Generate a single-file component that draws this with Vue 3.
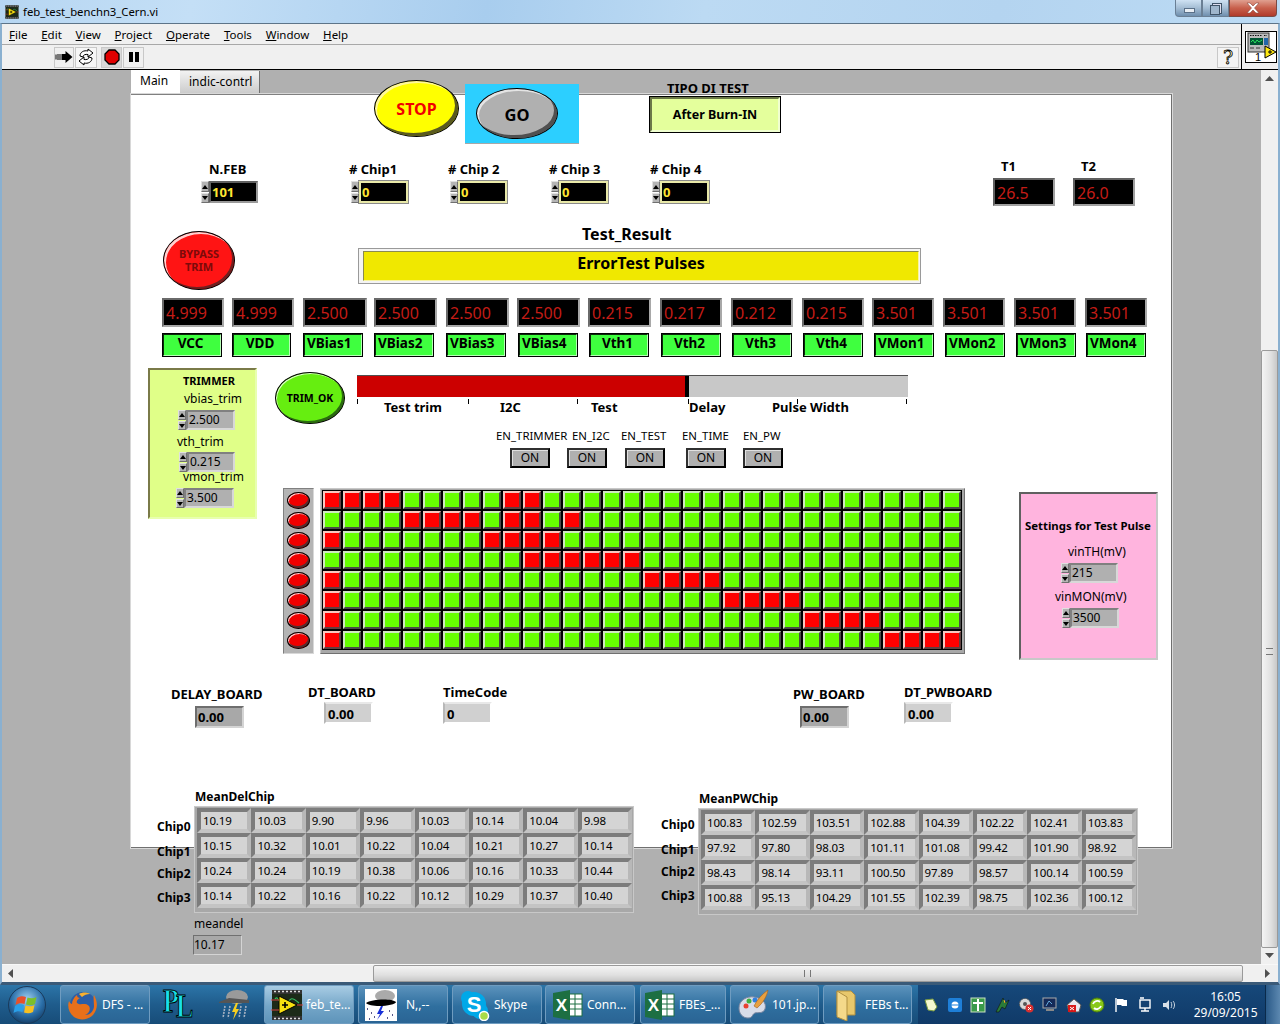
<template>
  <div class="screen">
    <svg class="defs" width="0" height="0">
      <symbol id="lv" viewBox="0 0 32 32">
        <rect x="1" y="1" width="30" height="30" fill="#1c2a18" />
        <rect x="1" y="1" width="30" height="4" fill="#333" />
        <rect x="1" y="27" width="30" height="4" fill="#333" />
        <path d="M3 2.500h26M3 29.500h26" stroke="#ddd" stroke-width="1.400" stroke-dasharray="2 2" />
        <path d="M4 10c4-6 6 14 11 6s6-8 13-2" fill="none" stroke="#35c060" stroke-width="1.200" />
        <path d="M8 7l18 9-18 9z" fill="#f8e010" stroke="#000" />
        <path d="M11 16h6M14 13v6" stroke="#000" stroke-width="1.600" />
        <path d="M0 11h8M0 21h8" stroke="#d04040" />
        <path d="M26 16h6" stroke="#d04040" />
      </symbol>
    </svg>

    <div class="titlebar">
      <svg class="title-icon"><use href="#lv" /></svg>
      <span class="title-text">feb_test_benchn3_Cern.vi</span>
      <div class="winbtns">
        <div class="winbtn min"><i></i></div>
        <div class="winbtn max"><i></i><b></b></div>
        <div class="winbtn close">
          <svg width="16" height="12" viewBox="0 0 16 12">
            <path d="M2 1h3l3 3 3-3h3l-4.500 5 4.500 5h-3l-3-3-3 3h-3l4.500-5z" fill="#fff" stroke="#8a4a40" stroke-width=".6" />
          </svg>
        </div>
      </div>
    </div>

    <div class="window">
      <div class="head">
        <div class="bars">
          <div class="menubar">
            <span v-for="m in menus" :key="m" class="menu-item"><u>{{ m[0] }}</u>{{ m.slice(1) }}</span>
          </div>
          <div class="toolbar">
            <div class="tool">
              <svg width="18" height="14" viewBox="0 0 18 14">
                <path d="M1 4.500v5M3 4v6M5 4v6" stroke="#000" />
                <path d="M6.500 4h4V1l7 6-7 6v-3h-4z" fill="#000" />
              </svg>
            </div>
            <div class="tool wide">
              <svg width="18" height="18" viewBox="0 0 18 18">
                <path d="M3 8c0-4 4-6 8-5V1l5 4-5 4V6.500c-2.500-.5-5 .3-5 2.500z" fill="#fff" stroke="#000" />
                <path d="M15 10c0 4-4 6-8 5v2l-5-4 5-4v2.500c2.500.5 5-.3 5-2.500z" fill="#fff" stroke="#000" />
              </svg>
            </div>
            <div class="tool abort">
              <svg width="16" height="16" viewBox="0 0 16 16">
                <path d="M5 1h6l4 4v6l-4 4H5l-4-4V5z" fill="#e00000" stroke="#000" stroke-width="1.300" />
              </svg>
            </div>
            <div class="tool">
              <svg width="12" height="12" viewBox="0 0 12 12"><path d="M1 1h4v10H1zM7 1h4v10H7z" /></svg>
            </div>
            <div class="tool help"><span class="help-q">?</span></div>
          </div>
        </div>
        <div class="vi-cell">
          <div class="vi-icon">
            <svg width="30" height="30" viewBox="0 0 30 30">
              <rect x="2" y="1" width="21" height="19" fill="#bbb" stroke="#333" />
              <path d="M4 3.500h12M18 3.500h3" stroke="#111" stroke-dasharray="1.500 1" />
              <rect x="4" y="6" width="13" height="7" fill="#053" />
              <path d="M5 10l2-2 2 3 2-3 2 2 3-2" stroke="#3f6" fill="none" stroke-width=".8" />
              <rect x="18" y="6" width="4" height="7" fill="#26a" />
              <path d="M4 16h4M10 16h4" stroke="#333" />
              <path d="M19 14l11 6-11 6z" fill="#ffe810" stroke="#000" />
              <path d="M22 20h4M24 18v4" stroke="#000" />
              <text x="9" y="29" class="vi-num">1</text>
            </svg>
          </div>
        </div>
      </div>

      <div class="middle">
        <div class="canvas">
          <div class="tab-strip">
            <div class="tab active">Main</div>
            <div class="tab">indic-contrl</div>
          </div>
          <div class="panel"></div>

          <div class="oval stop">STOP</div>
          <div class="go-back"><div class="oval go">GO</div></div>
          <div class="test-type">After Burn-IN</div>

          <div class="result-bar"><div class="result-fill">ErrorTest Pulses</div></div>
          <div class="oval bypass">BYPASS<br />TRIM</div>
          <div class="oval trim-ok">TRIM_OK</div>

          <div v-for="l in labels" :key="l.text + l.x" class="lbl" :class="l.cls" :style="at(l.x, l.y - 10)">{{ l.text }}</div>

          <div v-for="n in numerics" :key="n.key" class="numeric" :style="at(n.x, n.y)">
            <div class="spin"><span class="up"></span><span class="down"></span></div>
            <div class="num-box" :class="n.cls" :style="{ width: n.w + 'px', height: n.h + 'px' }">{{ n.value }}</div>
          </div>

          <div v-for="(v, i) in readings" :key="'r' + i" class="reading" :style="{ ...at(v.x, 298), width: v.w + 'px' }">{{ v.value }}</div>
          <div class="reading temp" :style="at(993, 178)">26.5</div>
          <div class="reading temp" :style="at(1073, 178)">26.0</div>
          <div v-for="b in greens" :key="b.text" class="green-btn" :class="b.cls" :style="{ ...at(b.x, 333), width: b.w + 'px' }">{{ b.text }}</div>

          <div class="trimmer"></div>
          <div class="pink"></div>
          <!-- these sit over the two coloured boxes so they come later in the list -->
          <div v-for="l in panelLabels" :key="l.text" class="lbl" :class="l.cls" :style="at(l.x, l.y - 10)">{{ l.text }}</div>
          <div v-for="n in panelNumerics" :key="n.key" class="numeric" :style="at(n.x, n.y)">
            <div class="spin"><span class="up"></span><span class="down"></span></div>
            <div class="num-box grey" :style="{ width: n.w + 'px', height: n.h + 'px' }">{{ n.value }}</div>
          </div>

          <div class="slide">
            <div class="slide-fill"></div>
            <div class="slide-knob"></div>
          </div>
          <div v-for="t in ticks" :key="t" class="tick" :style="at(t, 399)"></div>

          <div v-for="b in onButtons" :key="b" class="on-btn" :style="at(b, 448)">ON</div>

          <div class="led-col">
            <div v-for="i in 8" :key="i" class="led"></div>
          </div>

          <div class="matrix">
            <div class="matrix-inner">
              <template v-for="(row, r) in matrix" :key="r">
                <div v-for="(on, c) in row" :key="c" class="cell" :class="on ? 'red' : 'green'"></div>
              </template>
            </div>
          </div>

          <div v-for="b in boards" :key="b.x" class="board" :class="b.cls" :style="at(b.x, b.y)">{{ b.value }}</div>

          <div v-for="t in tables" :key="t.x" class="table" :style="at(t.x, t.y)">
            <template v-for="(row, r) in t.rows" :key="r">
              <div v-for="(v, c) in row" :key="c" class="tcell">{{ v }}</div>
            </template>
          </div>
          <div class="meandel">10.17</div>
        </div>

        <div class="vscroll">
          <svg class="arrow" width="9" height="6" viewBox="0 0 9 6"><path d="M4.500 0l4.500 5H0z" fill="#505050" /></svg>
          <div class="vtrack"><div class="vthumb"><i></i></div></div>
          <svg class="arrow" width="9" height="6" viewBox="0 0 9 6"><path d="M4.500 6L9 1H0z" fill="#505050" /></svg>
        </div>
      </div>

      <div class="hscroll">
        <svg width="6" height="9" viewBox="0 0 6 9"><path d="M0 4.500L5 0v9z" fill="#505050" /></svg>
        <div class="htrack"><div class="hthumb"><i></i></div></div>
        <svg width="6" height="9" viewBox="0 0 6 9"><path d="M6 4.500L1 0v9z" fill="#505050" /></svg>
      </div>
    </div>

    <div class="taskbar">
      <div class="orb-slot">
        <svg width="40" height="40" viewBox="0 0 40 40">
          <defs>
            <radialGradient id="orb" cx=".5" cy=".35" r=".7">
              <stop offset="0" stop-color="#9fd0f0" />
              <stop offset=".6" stop-color="#2a6ea8" />
              <stop offset="1" stop-color="#12365c" />
            </radialGradient>
          </defs>
          <circle cx="20" cy="20" r="18.500" fill="url(#orb)" stroke="#1a3a5a" />
          <path d="M10 13c3-2 6-2 9-1l-1.500 7c-3-1-6-1-9 1z" fill="#e8502a" />
          <path d="M20.500 12.500c3 1 6 1 9-.5l-1.500 7c-3 1.500-6 1.500-9 .5z" fill="#7cbf2a" />
          <path d="M8 21c3-2 6-2 9-1l-1.500 7c-3-1-6-1-9 1z" fill="#2a9fe8" />
          <path d="M18.500 20.500c3 1 6 1 9-.5L26 27c-3 1.500-6 1.500-9 .5z" fill="#f8c020" />
        </svg>
      </div>

      <div class="task-btn" style="width: 90px">
        <svg class="task-icon" viewBox="0 0 32 32">
          <circle cx="16" cy="16" r="13" fill="#2b5ea7" />
          <path d="M27 6c4 7 4 14-1 20-5 5-13 6-19 2C2 24 0 18 2 12c1 2 2 3 3 3 0-3 2-7 5-9 0 2 1 3 3 3-2 1-4 3-3 5 3 3 8-1 12 3 2 3 0 8-4 9 6 0 9-5 9-9 0-4-1-8 0-11z" fill="#e8701a" />
          <path d="M12 5c3-2 8-2 11 0-3 0-6 1-8 3z" fill="#f8b030" />
        </svg>
        <span>DFS - ...</span>
      </div>
      <div class="plain-slot pl-slot">
        <span class="pl-letter pl-p">P</span>
        <span class="pl-letter pl-l">L</span>
      </div>
      <div class="plain-slot storm-slot">
        <svg width="34" height="34" viewBox="0 0 34 34">
          <ellipse cx="20" cy="9" rx="11" ry="7" fill="#9a9a9a" />
          <path d="M2 14l10-4 20 2v3H2z" fill="#555" />
          <path d="M8 18l-2 12M13 18l-2 12M24 18l-2 12M29 18l-2 12" stroke="#a8b4c4" stroke-dasharray="2 1" stroke-width="1.600" />
          <path d="M19 15l-4 9h3l-2 8 6-11h-3l2-6z" fill="#f8d020" />
        </svg>
      </div>
      <div class="task-btn active" style="width: 90px">
        <svg class="task-icon"><use href="#lv" /></svg>
        <span>feb_te...</span>
      </div>
      <div class="task-btn" style="width: 90px">
        <svg class="task-icon noise" viewBox="0 0 32 32">
          <rect width="32" height="32" fill="#fff" />
          <ellipse cx="20" cy="7" rx="10" ry="6" fill="#aaa" />
          <path d="M1 14c5-4 26-5 30-1 0 4-26 6-30 1z" fill="#000" />
          <path d="M2 20h1M6 24h1M9 28h1M4 30h1M24 22h1M27 26h1M22 29h1" stroke="#226" stroke-width="1.500" />
          <path d="M16 17l-4 8h3l-3 6 7-9h-3l2-5z" fill="#1830d8" />
        </svg>
        <span class="mid-text">N,,--</span>
      </div>
      <div class="task-btn" style="width: 90px">
        <svg class="task-icon" viewBox="0 0 32 32">
          <circle cx="9" cy="9" r="7" fill="#00a8e8" />
          <circle cx="21" cy="22" r="8" fill="#00a8e8" />
          <circle cx="15" cy="15" r="12" fill="#00a8e8" />
          <text x="15" y="23" class="skype-s">S</text>
          <circle cx="25" cy="27" r="4.500" fill="#a8dc48" stroke="#fff" stroke-width="1.500" />
        </svg>
        <span>Skype</span>
      </div>
      <div class="task-btn" style="width: 90px; margin-left: -1px">
        <svg class="task-icon" viewBox="0 0 32 32">
          <rect x="16" y="5" width="14" height="22" fill="#fff" stroke="#1d6f42" />
          <path d="M16 10h14M16 15h14M16 20h14M23 5v22" stroke="#1d6f42" />
          <path d="M1 4l17-3v30l-17-3z" fill="#1d6f42" />
          <text x="9.500" y="22" class="excel-x">X</text>
        </svg>
        <span>Conn...</span>
      </div>
      <div class="task-btn shift" style="width: 86px; margin-left: 1px">
        <svg class="task-icon" viewBox="0 0 32 32">
          <rect x="16" y="5" width="14" height="22" fill="#fff" stroke="#1d6f42" />
          <path d="M16 10h14M16 15h14M16 20h14M23 5v22" stroke="#1d6f42" />
          <path d="M1 4l17-3v30l-17-3z" fill="#1d6f42" />
          <text x="9.500" y="22" class="excel-x">X</text>
        </svg>
        <span>FBEs_...</span>
      </div>
      <div class="task-btn" style="width: 89px">
        <svg class="task-icon" viewBox="0 0 32 32">
          <path d="M2 19c0-8 8-12 15-11 8 1 13 6 11 12-2 5-7 3-10 4s-2 5-7 5-9-4-9-10z" fill="#d8dce8" stroke="#7a86a0" />
          <circle cx="9" cy="17" r="2.500" fill="#e84030" />
          <circle cx="12" cy="12" r="2.500" fill="#40b040" />
          <circle cx="18" cy="11" r="2.500" fill="#3080e0" />
          <path d="M31 1c-1 6-5 13-11 18l-3-2c3-6 8-12 14-16z" fill="#e8a040" stroke="#a06020" stroke-width=".6" />
        </svg>
        <span>101.jp...</span>
      </div>
      <div class="task-btn folder" style="width: 89px">
        <svg class="task-icon" viewBox="0 0 32 32">
          <path d="M8 2h14l4 4v20H8z" fill="#e8c86c" stroke="#b09040" />
          <path d="M8 2l10 6v24L8 28z" fill="#f4d98a" stroke="#b09040" />
        </svg>
        <span class="far-text">FEBs t...</span>
      </div>

      <div class="tray">
        <svg class="tray-ico" viewBox="0 0 16 16"><path d="M2 3l8-1 4 8-3 4-6-1z" fill="#f4f8d0" stroke="#7a9a40" /></svg>
        <svg class="tray-ico" viewBox="0 0 16 16"><rect x="1" y="1" width="14" height="14" rx="2" fill="#1e7fd8" /><circle cx="8" cy="8" r="3.500" fill="#fff" /><path d="M4 8h8" stroke="#1e7fd8" /></svg>
        <svg class="tray-ico" viewBox="0 0 16 16"><rect x="1" y="1" width="14" height="14" fill="#3a9a4a" stroke="#c8e0c0" /><path d="M8 2v12M3 6h10" stroke="#fff" stroke-width="2" /></svg>
        <svg class="tray-ico" viewBox="0 0 16 16"><path d="M2 15L9 1l2 5 4-3-4 9-3-2-3 5z" fill="#2a7a3a" stroke="#111" stroke-width=".6" /><path d="M10 3l1 3" stroke="#f8c020" /></svg>
        <svg class="tray-ico" viewBox="0 0 16 16"><circle cx="7" cy="7" r="5.500" fill="#d8d8d8" stroke="#555" stroke-dasharray="2 1" /><circle cx="7" cy="7" r="2" fill="#555" /><circle cx="11.500" cy="11.500" r="4" fill="#d83030" /><path d="M10 10l3 3M13 10l-3 3" stroke="#fff" /></svg>
        <svg class="tray-ico" viewBox="0 0 16 16"><rect x="1" y="1" width="13" height="10" fill="#142a58" stroke="#aaa" /><path d="M4 9l3-5 3 3" stroke="#6ad" fill="none" /><rect x="4" y="12" width="8" height="2" fill="#888" /></svg>
        <svg class="tray-ico" viewBox="0 0 16 16"><path d="M1 8l7-6 7 6-2 7H3z" fill="#e8e8f0" stroke="#555" /><rect x="2" y="8" width="8" height="7" fill="#d81818" /><path d="M4 10l4 3M8 10l-4 3" stroke="#fff" /></svg>
        <svg class="tray-ico" viewBox="0 0 16 16"><circle cx="8" cy="8" r="7" fill="#88c818" stroke="#4a7a10" /><path d="M4 7c1-3 5-4 7-2M12 9c-1 3-5 4-7 2" stroke="#fff" stroke-width="1.800" fill="none" /></svg>
        <svg class="tray-ico" viewBox="0 0 16 16"><path d="M3 1v14" stroke="#fff" stroke-width="1.400" /><path d="M4 2h6l1 1h3v6H9L8 8H4z" fill="#fff" /></svg>
        <svg class="tray-ico" viewBox="0 0 16 16"><rect x="3" y="3" width="10" height="8" fill="none" stroke="#fff" stroke-width="1.400" /><path d="M8 11v3M4 14h8M3 1h4" stroke="#fff" stroke-width="1.400" /></svg>
        <svg class="tray-ico" viewBox="0 0 16 16"><path d="M2 6h3l3-3v10l-3-3H2z" fill="#d8e0e8" /><path d="M10 5c1 2 1 4 0 6M12 4c2 2 2 6 0 8" stroke="#c8d4e0" fill="none" /></svg>
        <div class="clock"><div>16:05</div><div>29/09/2015</div></div>
        <div class="show-desktop"></div>
      </div>
    </div>
  </div>
</template>

<script setup>
import { computed } from 'vue';

const menus = ['File', 'Edit', 'View', 'Project', 'Operate', 'Tools', 'Window', 'Help'];

// front panel objects are placed like on the LabVIEW panel, coordinates are screen pixels
function at(x, y) {
  return { left: (x - 2) + 'px', top: (y - 70) + 'px' };
}

const labels = [
  { text: 'TIPO DI TEST', x: 667, y: 88, cls: 'b13' },
  { text: 'N.FEB', x: 209, y: 169, cls: 'b13' },
  { text: '# Chip1', x: 349, y: 169, cls: 'b13' },
  { text: '# Chip 2', x: 448, y: 169, cls: 'b13' },
  { text: '# Chip 3', x: 549, y: 169, cls: 'b13' },
  { text: '# Chip 4', x: 650, y: 169, cls: 'b13' },
  { text: 'T1', x: 1001, y: 166, cls: 'b13' },
  { text: 'T2', x: 1081, y: 166, cls: 'b13' },
  { text: 'Test_Result', x: 582, y: 234, cls: 'b16' },
  { text: 'Test trim', x: 384, y: 407, cls: 'b13' },
  { text: 'I2C', x: 500, y: 407, cls: 'b13' },
  { text: 'Test', x: 591, y: 407, cls: 'b13' },
  { text: 'Delay', x: 689, y: 407, cls: 'b13' },
  { text: 'Pulse Width', x: 772, y: 407, cls: 'b13' },
  { text: 'EN_TRIMMER', x: 496, y: 436, cls: 'n11' },
  { text: 'EN_I2C', x: 572, y: 436, cls: 'n11' },
  { text: 'EN_TEST', x: 621, y: 436, cls: 'n11' },
  { text: 'EN_TIME', x: 682, y: 436, cls: 'n11' },
  { text: 'EN_PW', x: 743, y: 436, cls: 'n11' },
  { text: 'DELAY_BOARD', x: 171, y: 694, cls: 'b13' },
  { text: 'DT_BOARD', x: 308, y: 692, cls: 'b13' },
  { text: 'TimeCode', x: 443, y: 692, cls: 'b13' },
  { text: 'PW_BOARD', x: 793, y: 694, cls: 'b13' },
  { text: 'DT_PWBOARD', x: 904, y: 692, cls: 'b13' },
  { text: 'MeanDelChip', x: 195, y: 797, cls: 'b12' },
  { text: 'Chip0', x: 157, y: 827, cls: 'b12' },
  { text: 'Chip1', x: 157, y: 852, cls: 'b12' },
  { text: 'Chip2', x: 157, y: 874, cls: 'b12' },
  { text: 'Chip3', x: 157, y: 898, cls: 'b12' },
  { text: 'MeanPWChip', x: 699, y: 799, cls: 'b12' },
  { text: 'Chip0', x: 661, y: 825, cls: 'b12' },
  { text: 'Chip1', x: 661, y: 850, cls: 'b12' },
  { text: 'Chip2', x: 661, y: 872, cls: 'b12' },
  { text: 'Chip3', x: 661, y: 896, cls: 'b12' },
  { text: 'meandel', x: 194, y: 924, cls: 'n12' },
];

const panelLabels = [
  { text: 'TRIMMER', x: 183, y: 381, cls: 'b11' },
  { text: 'vbias_trim', x: 184, y: 399, cls: 'n12' },
  { text: 'vth_trim', x: 177, y: 442, cls: 'n12' },
  { text: 'vmon_trim', x: 183, y: 477, cls: 'n12' },
  { text: 'Settings for Test Pulse', x: 1025, y: 526, cls: 'b114' },
  { text: 'vinTH(mV)', x: 1068, y: 552, cls: 'n12' },
  { text: 'vinMON(mV)', x: 1055, y: 597, cls: 'n12' },
];

const numerics = [
  { key: 'feb', x: 201, y: 181, w: 49, h: 22, value: '101' },
  { key: 'c1', x: 351, y: 181, w: 49, h: 22, value: '0', cls: 'yellow' },
  { key: 'c2', x: 450, y: 181, w: 49, h: 22, value: '0', cls: 'yellow' },
  { key: 'c3', x: 551, y: 181, w: 49, h: 22, value: '0', cls: 'yellow' },
  { key: 'c4', x: 652, y: 181, w: 49, h: 22, value: '0', cls: 'yellow' },
];

const panelNumerics = [
  { key: 'vb', x: 178, y: 410, w: 49, h: 20, value: '2.500' },
  { key: 'vt', x: 179, y: 452, w: 48, h: 20, value: '0.215' },
  { key: 'vm', x: 176, y: 488, w: 50, h: 20, value: '3.500' },
  { key: 'th', x: 1061, y: 563, w: 49, h: 20, value: '215' },
  { key: 'mon', x: 1062, y: 608, w: 49, h: 20, value: '3500' },
];

const readings = [
  [162, 62, '4.999'], [232, 62, '4.999'], [303, 64, '2.500'], [374, 63, '2.500'], [446, 63, '2.500'], [517, 63, '2.500'],
  [588, 63, '0.215'], [660, 62, '0.217'], [731, 62, '0.212'], [802, 62, '0.215'],
  [872, 62, '3.501'], [943, 62, '3.501'], [1014, 62, '3.501'], [1085, 62, '3.501'],
].map(([x, w, value]) => ({ x, w, value }));

const greens = [
  { text: 'VCC', x: 162, w: 60, cls: 'center' }, { text: 'VDD', x: 232, w: 59, cls: 'center' },
  { text: 'VBias1', x: 303, w: 60 }, { text: 'VBias2', x: 374, w: 60 }, { text: 'VBias3', x: 446, w: 60 }, { text: 'VBias4', x: 518, w: 60 },
  { text: 'Vth1', x: 589, w: 60, cls: 'center' }, { text: 'Vth2', x: 661, w: 60, cls: 'center' }, { text: 'Vth3', x: 732, w: 60, cls: 'center' }, { text: 'Vth4', x: 803, w: 60, cls: 'center' },
  { text: 'VMon1', x: 874, w: 60 }, { text: 'VMon2', x: 945, w: 60 }, { text: 'VMon3', x: 1016, w: 60 }, { text: 'VMon4', x: 1086, w: 60 },
];

const ticks = [357, 468, 577, 688, 797, 906];
const onButtons = [510, 567, 625, 686, 743];

const boards = [
  { x: 195, y: 706, value: '0.00', cls: 'sunk' },
  { x: 324, y: 702, value: '0.00', cls: 'flat' },
  { x: 443, y: 702, value: '0', cls: 'flat' },
  { x: 800, y: 706, value: '0.00', cls: 'sunk' },
  { x: 904, y: 702, value: '0.00', cls: 'flat' },
];

const tables = [
  {
    x: 194, y: 806,
    rows: [
      ['10.19', '10.03', '9.90', '9.96', '10.03', '10.14', '10.04', '9.98'],
      ['10.15', '10.32', '10.01', '10.22', '10.04', '10.21', '10.27', '10.14'],
      ['10.24', '10.24', '10.19', '10.38', '10.06', '10.16', '10.33', '10.44'],
      ['10.14', '10.22', '10.16', '10.22', '10.12', '10.29', '10.37', '10.40'],
    ],
  },
  {
    x: 698, y: 808,
    rows: [
      ['100.83', '102.59', '103.51', '102.88', '104.39', '102.22', '102.41', '103.83'],
      ['97.92', '97.80', '98.03', '101.11', '101.08', '99.42', '101.90', '98.92'],
      ['98.43', '98.14', '93.11', '100.50', '97.89', '98.57', '100.14', '100.59'],
      ['100.88', '95.13', '104.29', '101.55', '102.39', '98.75', '102.36', '100.12'],
    ],
  },
];

// red ranges per row of the 32x8 led matrix
const redCols = [
  [[0, 3], [9, 10]],
  [[4, 7], [9, 10], [12, 12]],
  [[0, 0], [8, 11]],
  [[10, 15]],
  [[0, 0], [16, 19]],
  [[0, 0], [20, 23]],
  [[0, 0], [24, 27]],
  [[0, 0], [28, 31]],
];
const matrix = computed(() =>
  redCols.map(ranges => Array.from({ length: 32 }, (_, c) => ranges.some(([a, b]) => c >= a && c <= b)))
);
</script>

<style>
html, body { margin: 0; padding: 0; background: #000; }
</style>

<style scoped>
.screen { width: 1280px; height: 1024px; display: flex; flex-direction: column; overflow: hidden; font-family: "Noto Sans", "Open Sans", sans-serif; color: #000; }
.defs { position: absolute; }
.excel-x { font: bold 17px "Liberation Sans", sans-serif; fill: #fff; text-anchor: middle; }

.titlebar { height: 23px; flex: none; display: flex; align-items: flex-start; background: linear-gradient(100deg, #b6d6f2 0%, #c4dff6 15%, #a8cdee 38%, #bcdaf3 55%, #b4d4f0 78%, #bcdbf4 100%); }
.title-icon { width: 14px; height: 14px; margin: 5px 0 0 5px; }
.title-text { font-size: 11.300px; line-height: 16px; margin: 4px 0 0 4px; }
.winbtns { margin-left: auto; margin-right: 3px; display: flex; height: 17px; }
.winbtn { width: 27px; height: 17px; box-sizing: border-box; border: 1px solid #6a7f94; border-top: none; background: linear-gradient(#cfe2f3, #a4bdd4 50%, #6f8fae); position: relative; display: flex; align-items: center; justify-content: center; }
.winbtn.min { border-radius: 0 0 0 4px; }
.winbtn.min i { position: absolute; left: 8px; top: 8px; width: 11px; background: #e8eef4; border: 1px solid #5a7088; box-sizing: border-box; height: 5px; }
.winbtn.max i { position: absolute; left: 9px; top: 3px; width: 8px; height: 9px; border: 1px solid #405468; box-shadow: inset 0 0 0 1px #dde; }
.winbtn.max b { position: absolute; left: 7px; top: 5px; width: 8px; height: 8px; border: 1px solid #405468; background: #9fb6cc; }
.winbtn.close { width: 48px; background: linear-gradient(#e0a090, #c8604c 50%, #b03a2a); border-radius: 0 0 4px 0; border-color: #7a4a44; }

.window { flex: 1; min-height: 0; display: flex; flex-direction: column; background: #f0f0f0; border: 1px solid #5d7488; border-width: 1px 2px 3px 2px; border-color: #5d7488 #8ab0d0 #3a5a78 #8ab0d0; }
.head { display: flex; height: 45px; flex: none; border-bottom: 1px solid #000; }
.bars { flex: 1; display: flex; flex-direction: column; }
.menubar { height: 20px; flex: none; border-bottom: 1px solid #a8a8a8; display: flex; align-items: center; padding-left: 7px; gap: 13.800px; font-size: 11.500px; }
.toolbar { flex: 1; display: flex; align-items: center; padding-left: 52px; }
.tool { width: 20px; height: 21px; box-sizing: border-box; background: #f0f0f0; border: 1px solid; border-color: #fff #707070 #707070 #fff; display: flex; align-items: center; justify-content: center; outline: 1px solid #c8c8c8; outline-offset: -1px; }
.tool.wide { width: 22px; margin-left: 1px; background: #f6f6f6; }
.tool.abort { width: 21px; margin-left: 4px; background: #d8d8d8; border-color: #808080 #fff #fff #808080; }
.tool.abort + .tool { width: 21px; margin-left: 1px; }
.tool.help { margin-left: auto; margin-right: 2px; width: 22px; background: #f4f4f4; border-color: #fff #505050 #505050 #fff; }
.help-q { font: 19px/19px "DejaVu Serif", serif; color: #fff7b8; -webkit-text-stroke: .8px #000; }
.vi-cell { width: 35px; border-left: 1px solid #000; display: flex; align-items: center; justify-content: flex-end; padding: 0 1px 0 0; }
.vi-icon { width: 32px; height: 32px; box-sizing: border-box; border: 1px solid #000; background: #fff; }
.vi-num { font: 11px "Liberation Sans", sans-serif; fill: #000; }

.middle { flex: 1; min-height: 0; display: flex; }
.canvas { flex: 1; position: relative; background: #b0b0b0; overflow: hidden; }
.tab-strip { position: absolute; left: 129px; top: 0; height: 24px; display: flex; }
.tab { height: 23px; width: 80px; box-sizing: border-box; margin-top: 1px; padding: 2px 0 0 9px; font-size: 12px; line-height: 17px; background: linear-gradient(#f2f2f2, #cccccc); border-right: 1px solid #707070; border-bottom: 1px solid #808080; }
.tab.active { width: 49px; height: 24px; margin-top: 0; background: #fff; border: none; }
.panel { position: absolute; left: 129px; top: 24px; width: 1041px; height: 754px; box-sizing: border-box; background: #fff; border-top: 1px solid #808080; border-right: 1px solid #707070; border-bottom: 1px solid #707070; outline: 1px solid #d8d8d8; outline-offset: 0; }

.lbl { position: absolute; white-space: nowrap; line-height: 20px; }
.b11 { font-size: 11px; font-weight: 700; }
.b114 { font-size: 11.400px; font-weight: 700; }
.b12 { font-size: 12px; font-weight: 700; }
.b13 { font-size: 13px; font-weight: 700; }
.b16 { font-size: 16px; font-weight: 700; }
.n11 { font-size: 11.400px; }
.n12 { font-size: 12px; }

.oval { position: absolute; box-sizing: border-box; border-radius: 50%; border: 1px solid #000; display: flex; align-items: center; justify-content: center; text-align: center; font-weight: 700; }
.stop { left: 372px; top: 10px; width: 85px; height: 57px; background: #ffff00; color: #f00000; font-size: 16px; box-shadow: inset 2px 2px 0 #fff89a, inset -3px -3px 0 #5a5a20; }
.go-back { position: absolute; left: 463px; top: 14px; width: 114px; height: 59px; background: #2ccfff; border-bottom: 1px solid #a8a8a8; }
.go { left: 11px; top: 4px; width: 82px; height: 51px; background: #b0b0b0; font-size: 16.500px; padding-top: 1px; box-shadow: inset 2px 2px 0 #e4e4e4, inset -3px -3px 0 #505050; }
.test-type { position: absolute; left: 647px; top: 26px; width: 132px; height: 37px; box-sizing: border-box; background: #e4ff9c; outline: 1px solid #000; outline-offset: -1px; border: 3px solid; border-color: #6b7848 #f0ffd0 #f0ffd0 #6b7848; display: flex; align-items: center; justify-content: center; font-size: 12.500px; font-weight: 700; }

.numeric { position: absolute; display: flex; }
.spin { width: 8px; display: flex; flex-direction: column; gap: 1px; }
.spin span { flex: 1; background: #b4b4b4; position: relative; border: 1px solid; border-color: #e0e0e0 #707070 #707070 #e0e0e0; }
.spin span::after { content: ""; position: absolute; left: 0; border-left: 3px solid transparent; border-right: 3px solid transparent; }
.spin .up::after { bottom: 2px; border-bottom: 4px solid #000; }
.spin .down::after { top: 2px; border-top: 4px solid #000; }
.num-box { box-sizing: border-box; background: #000; color: #ffe633; border: 2px solid; border-color: #606060 #9a9a9a #9a9a9a #606060; font-size: 13px; font-weight: 700; line-height: 18px; padding-left: 1px; }
.num-box.yellow { border-color: #e8e8a8; outline: 1px solid #8a8a8a; }
.num-box.grey { background: #b0b0b0; color: #000; font-size: 12px; font-weight: 400; line-height: 16px; border-color: #808080 #d8d8d8 #d8d8d8 #808080; }

.reading { position: absolute; height: 29px; box-sizing: border-box; background: #000; color: #c41c16; border: 2px solid; border-color: #6a6a6a #a8a8a8 #a8a8a8 #6a6a6a; font-size: 16px; line-height: 27px; padding-left: 2px; }
.reading.temp { width: 62px; height: 28px; border-color: #606060 #a0a0a0 #a0a0a0 #606060; }
.green-btn { position: absolute; height: 24px; box-sizing: border-box; background: #3fff3f; border: 2px solid; border-color: #0a2a0a #b6ffb6 #b6ffb6 #0a2a0a; outline: 1px solid #000; outline-offset: -1px; font-size: 13.500px; font-weight: 700; line-height: 16px; padding-left: 2px; }
.green-btn.center { text-align: center; padding-left: 0; padding-right: 3px; }

.result-bar { position: absolute; left: 356px; top: 178px; width: 563px; height: 36px; box-sizing: border-box; padding: 2px 1px 2px 4px; background: #f4f4f4; border: 1px solid #9a9a9a; }
.result-fill { height: 100%; background: #f0e800; border: 1px solid; border-color: #8a8a50 #f8f4a0 #f8f4a0 #8a8a50; box-sizing: border-box; text-align: center; font-size: 16px; font-weight: 700; line-height: 23px; }
.bypass { left: 161px; top: 161px; width: 72px; height: 59px; background: #ff1414; color: #7c0a0a; font-size: 11px; line-height: 13px; padding-bottom: 2px; box-shadow: inset 2px 2px 0 #ffd0d0, inset -2px -2px 0 #702020; }
.trim-ok { left: 273px; top: 302px; width: 70px; height: 52px; background: #66ee10; font-size: 10.500px; box-shadow: inset 1px 1px 0 #d8ffc0, inset -2px -2px 0 #2a6a10; }

.trimmer { position: absolute; left: 146px; top: 298px; width: 109px; height: 151px; box-sizing: border-box; background: #e0ff88; border: 2px solid; border-color: #7a7a48 #e8ffb0 #e8ffb0 #7a7a48; }
.pink { position: absolute; left: 1017px; top: 422px; width: 139px; height: 168px; box-sizing: border-box; background: #ffb4de; border: 2px solid; border-color: #606060 #c8c8c8 #c8c8c8 #606060; }

.slide { position: absolute; left: 355px; top: 305px; width: 551px; height: 22px; box-sizing: border-box; background: #c8c8c8; border-top: 1px solid #505050; display: flex; }
.slide-fill { width: 328px; background: #cc0000; }
.slide-knob { width: 4px; background: #000; }
.tick { position: absolute; width: 1px; height: 5px; background: #000; }
.on-btn { position: absolute; width: 40px; height: 20px; box-sizing: border-box; background: #b0b0b0; border: 2px solid; border-color: #303030 #000 #000 #303030; box-shadow: inset 1px 1px 0 #e0e0e0; text-align: center; font-size: 12px; line-height: 16px; }

.led-col { position: absolute; left: 281px; top: 418px; width: 31px; height: 166px; box-sizing: border-box; background: #b4b4b4; border: 1px solid; border-color: #808080 #d8d8d8 #d8d8d8 #808080; padding-top: 3px; display: flex; flex-direction: column; align-items: center; gap: 3px; }
.led { width: 23px; height: 17px; box-sizing: border-box; border-radius: 50%; background: #f00000; border: 1px solid #000; box-shadow: inset 1px 1px 0 #ffd0d0, inset -1px -2px 0 #503030; }

.matrix { position: absolute; left: 318px; top: 418px; width: 645px; height: 166px; box-sizing: border-box; background: #a8a8a8; border: 1px solid; border-color: #c8c8c8 #707070 #707070 #c8c8c8; padding: 2px; }
.matrix-inner { width: 638px; background: #000; display: grid; grid-template-columns: repeat(32, 18px); grid-auto-rows: 18px; gap: 2px; outline: 1px solid #000; }
.cell { box-sizing: border-box; border: 2px solid; }
.cell.green { background: #66ff00; border-color: #d0e8c0 #4a4a4a #4a4a4a #d0e8c0; }
.cell.red { background: #ff0000; border-color: #f8c8c0 #604040 #604040 #f8c8c0; }

.board { position: absolute; width: 49px; height: 22px; box-sizing: border-box; font-size: 13px; font-weight: 700; line-height: 18px; padding-left: 1px; }
.board.sunk { background: #a8a8a8; border: 2px solid; border-color: #6e6e6e #d4d4d4 #d4d4d4 #6e6e6e; }
.board.flat { background: #d0d0d0; border: 2px solid; border-color: #e8e8e8 #fff #fff #b8b8b8; padding-left: 2px; line-height: 20px; }

.table { position: absolute; width: 440px; height: 107px; box-sizing: border-box; background: #a8a8a8; border: 1px solid #c8c8c8; padding: 1px 2px; display: grid; grid-template-columns: repeat(8, 54.400px); grid-auto-rows: 25px; }
.tcell { box-sizing: border-box; background: #d4d4d4; border: 4px solid; border-color: #7c7c7c #b8b8b8 #c4c4c4 #7c7c7c; font-size: 11.500px; letter-spacing: -.15px; line-height: 17px; padding-left: 2px; }
.meandel { position: absolute; left: 191px; top: 865px; width: 49px; height: 20px; box-sizing: border-box; background: #a8a8a8; border: 1px solid; border-color: #707070 #d4d4d4 #d4d4d4 #707070; font-size: 12px; line-height: 18px; }

.vscroll { width: 17px; flex: none; display: flex; flex-direction: column; align-items: center; background: #f0f0f0; }
.arrow { margin: 6px 0; flex: none; }
.vtrack { flex: 1; width: 100%; position: relative; }
.vthumb { position: absolute; left: 0; right: 0; top: 262px; height: 598px; box-sizing: border-box; background: linear-gradient(90deg, #f4f4f4, #e0e0e0 60%, #c8c8c8); border: 1px solid #9a9a9a; border-radius: 2px; }
.vthumb i { position: absolute; left: 4px; right: 4px; top: 297px; height: 5px; border-top: 1px solid #777; border-bottom: 1px solid #777; }
.hscroll { height: 17px; flex: none; display: flex; align-items: center; padding: 0 8px 0 6px; gap: 6px; background: #f0f0f0; border-top: 1px solid #f8f8f8; }
.htrack { flex: 1; height: 100%; position: relative; }
.hthumb { position: absolute; left: 353px; width: 870px; top: 0; bottom: 0; box-sizing: border-box; background: linear-gradient(#f4f4f4, #e0e0e0 60%, #c8c8c8); border: 1px solid #9a9a9a; border-radius: 2px; }
.hthumb i { position: absolute; left: 430px; top: 4px; bottom: 4px; width: 5px; border-left: 1px solid #777; border-right: 1px solid #777; }

.taskbar { height: 39px; flex: none; display: flex; align-items: stretch; gap: 4px; background: linear-gradient(#2c75a8, #1f5c8c 50%, #174c78); color: #fff; }
.orb-slot { width: 56px; box-sizing: border-box; display: flex; align-items: center; justify-content: center; padding-right: 3px; }
.task-btn { box-sizing: border-box; display: flex; align-items: center; gap: 3px; padding: 0 2px 0 6px; border: 1px solid #6f9cc0; border-radius: 3px; background: linear-gradient(#5b92bc, #2f6f9f 55%, #2a6494); font-size: 12px; white-space: nowrap; }
.task-btn.active { background: linear-gradient(#a8cce4, #74a6c8 55%, #5e94ba); }
.task-btn.shift .task-icon { margin-left: -3px; }
.task-icon { width: 32px; height: 32px; flex: none; }
.noise { height: 32px; }
.mid-text { margin-left: 6px; }
.far-text { margin-left: 1px; }
.folder .task-icon { margin-left: -1px; }
.skype-s { font: bold 22px "Liberation Sans", sans-serif; fill: #fff; text-anchor: middle; }
.plain-slot { display: flex; align-items: center; justify-content: center; }
.pl-slot { width: 47px; position: relative; }
.pl-letter { position: absolute; font: bold 26px/26px "Liberation Serif", serif; color: #18e0e8; -webkit-text-stroke: .8px #000; transform: scaleY(1.300); }
.pl-p { left: 9px; top: 4px; }
.pl-l { left: 22px; top: 9px; }
.storm-slot { width: 55px; padding-left: 3px; box-sizing: border-box; }
.tray { flex: 1; display: flex; align-items: center; padding-left: 1px; background: linear-gradient(#16487a, #103a68); margin-left: 2px; position: relative; }
.tray-ico { width: 16px; height: 16px; flex: none; margin: 0 3.900px; }
.clock { width: 70px; margin-left: 10px; text-align: center; font-size: 12px; line-height: 16px; }
.show-desktop { position: absolute; right: 0; top: 0; bottom: 0; width: 14px; background: linear-gradient(90deg, #2a5a88, #5c88b0); border-left: 1px solid #0a2a4a; }
</style>
